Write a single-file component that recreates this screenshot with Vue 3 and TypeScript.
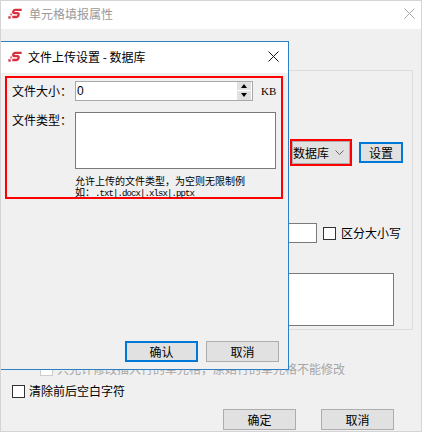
<script setup lang="ts">
// logo is shared by both title bars
const logoPath = "M17 2.4H8.6C7.2 2.4 6.6 3 6.3 4.5C6 6 6.5 6.6 8 6.6H11.5C13 6.6 13.4 7.3 13 8.7C12.6 10.6 12 11.4 10.5 11.4H5";
</script>

<template>
  <div class="window">
    <header class="titlebar">
      <svg class="logo" viewBox="0 0 17 14" width="14" height="11">
        <path :d="logoPath" fill="none" stroke="#d8303f" stroke-width="3" />
        <rect x="0" y="10.5" width="3" height="3" fill="#d8303f" />
        <rect x="2.4" y="7" width="2.4" height="2.4" fill="#e0606c" />
      </svg>
      <span class="title muted">单元格填报属性</span>
      <svg class="close" viewBox="0 0 11 11" width="11" height="11">
        <path d="M0.5 0.5L10.5 10.5M10.5 0.5L0.5 10.5" stroke="#a8a8a8" fill="none" />
      </svg>
    </header>

    <main class="body">
      <section class="group">
        <div class="row source-row">
          <div class="highlight source-mark">
            <div class="select">
              <span>数据库</span>
              <svg viewBox="0 0 9 5" width="9" height="5">
                <path d="M0.5 0.5L4.5 4.5L8.5 0.5" stroke="#666" fill="none" />
              </svg>
            </div>
          </div>
          <button class="btn btn-small primary">设置</button>
        </div>
        <div class="row match-row">
          <div class="field short"></div>
          <label class="check"><i class="box"></i>区分大小写</label>
        </div>
        <div class="field large"></div>
      </section>

      <label class="check disabled"><i class="box"></i>只允许修改插入行的单元格，原始行的单元格不能修改</label>
      <label class="check trim"><i class="box"></i>清除前后空白字符</label>

      <footer class="actions">
        <button class="btn">确定</button>
        <button class="btn">取消</button>
      </footer>
    </main>

    <div class="dialog">
      <header class="dialog-title">
        <svg class="logo" viewBox="0 0 17 14" width="14" height="11">
          <path :d="logoPath" fill="none" stroke="#d8303f" stroke-width="3" />
          <rect x="0" y="10.5" width="3" height="3" fill="#d8303f" />
          <rect x="2.4" y="7" width="2.4" height="2.4" fill="#e0606c" />
        </svg>
        <span class="title">文件上传设置 - 数据库</span>
        <svg class="close" viewBox="0 0 11 11" width="11" height="11">
          <path d="M0.5 0.5L10.5 10.5M10.5 0.5L0.5 10.5" stroke="#111" fill="none" />
        </svg>
      </header>

      <div class="dialog-body">
        <div class="highlight settings">
          <div class="setting size-row">
            <span class="label">文件大小：</span>
            <div class="spinner">
              <span class="value">0</span>
              <div class="spin-btns">
                <span class="spin"><i class="up"></i></span>
                <span class="spin"><i class="down"></i></span>
              </div>
            </div>
            <span class="unit">KB</span>
          </div>
          <div class="setting type-row">
            <span class="label">文件类型：</span>
            <div class="types">
              <div class="field area"></div>
              <p class="hint">允许上传的文件类型，为空则无限制例</p>
              <p class="hint">如：<span class="ext">.txt|.docx|.xlsx|.pptx</span></p>
            </div>
          </div>
        </div>
        <footer class="dialog-actions">
          <button class="btn primary">确认</button>
          <button class="btn">取消</button>
        </footer>
      </div>
    </div>
  </div>
</template>

<style>
html,
body {
  margin: 0;
  background: #f0f0f0;
}
</style>

<style scoped>
.window {
  position: relative;
  width: 422px;
  height: 432px;
  box-sizing: border-box;
  border: 1px solid #d4d4d4;
  display: flex;
  flex-direction: column;
  background: #f0f0f0;
  overflow: hidden;
  font-family: "Noto Sans CJK SC", "Liberation Sans", sans-serif;
  font-size: 12px;
  color: #000;
}

.titlebar {
  height: 28px;
  flex: none;
  box-sizing: border-box;
  background: #fff;
  display: flex;
  align-items: center;
  padding: 0 6px 3px 7px;
}

.logo {
  flex: none;
  margin-right: 7px;
}

.title {
  flex: 1;
  font-size: 12px;
}

.muted {
  color: #999;
}

.body {
  flex: 1;
  min-height: 0;
  display: flex;
  flex-direction: column;
}

.group {
  margin: 41px 8px 0 20px;
  height: 260px;
  flex: none;
  box-sizing: border-box;
  border: 1px solid #dcdcdc;
  padding-right: 18px;
  display: flex;
  flex-direction: column;
  align-items: flex-end;
}

.row {
  display: flex;
  align-items: center;
}

.source-row {
  margin: 68px -9px 0 0;
  gap: 7px;
}

.highlight {
  box-sizing: border-box;
  border: 2px solid #f00;
}

.select {
  width: 58px;
  height: 23px;
  box-sizing: border-box;
  border: 1px solid #adadad;
  background: #e1e1e1;
  display: flex;
  align-items: center;
  justify-content: space-between;
  padding: 0 5px 0 0;
}

.match-row {
  margin: 57px -7px 0 0;
  gap: 6px;
}

.match-row .check {
  gap: 5px;
}

.field {
  box-sizing: border-box;
  border: 1px solid #7a7a7a;
  background: #fff;
}

.short {
  width: 60px;
  height: 20px;
}

.large {
  width: 120px;
  height: 53px;
  margin-top: 30px;
}

.check {
  display: flex;
  align-items: center;
  gap: 4px;
  height: 16px;
  line-height: 16px;
  white-space: nowrap;
}

.box {
  width: 13px;
  height: 13px;
  box-sizing: border-box;
  border: 1px solid #333;
  background: #fff;
}

.disabled {
  margin: 31px 0 0 39px;
  color: #a6a6a6;
}

.disabled .box {
  border-color: #ccc;
}

.trim {
  margin: 6px 0 0 11px;
}

.actions {
  display: flex;
  justify-content: flex-end;
  gap: 25px;
  margin-top: 10px;
  padding-right: 27px;
}

.btn {
  width: 73px;
  height: 21px;
  box-sizing: border-box;
  padding: 0;
  border: 1px solid #adadad;
  background: #e1e1e1;
  font: inherit;
  line-height: 17px;
  color: #000;
}

.btn-small {
  width: 44px;
}

.primary {
  border: 2px solid #0078d7;
}

.dialog {
  position: absolute;
  left: -1px;
  top: 40px;
  width: 289px;
  height: 329px;
  box-sizing: border-box;
  border: 1px solid #2b7fc4;
  background: #f0f0f0;
  display: flex;
  flex-direction: column;
}

.dialog-title {
  height: 31px;
  flex: none;
  box-sizing: border-box;
  background: #fff;
  display: flex;
  align-items: center;
  padding: 0 9px 2px 7px;
}

.dialog-title .logo {
  margin-right: 6px;
}

.dialog-body {
  flex: 1;
  display: flex;
  flex-direction: column;
  padding: 3px 9px 7px 4px;
}

.settings {
  width: 278px;
  height: 123px;
  padding: 2px 0 0 5px;
}

.setting {
  display: flex;
}

.label {
  width: 63px;
  flex: none;
  line-height: 16px;
}

.size-row {
  align-items: center;
  height: 21px;
}

.spinner {
  width: 178px;
  height: 20px;
  box-sizing: border-box;
  border: 1px solid #a9a9a9;
  background: #fff;
  display: flex;
  justify-content: space-between;
  align-items: center;
  padding-left: 1px;
}

.value {
  font-family: "Liberation Sans", sans-serif;
}

.spin-btns {
  width: 14px;
  height: 18px;
  margin-right: 1px;
  display: flex;
  flex-direction: column;
  gap: 1px;
}

.spin {
  flex: 1;
  background: #e1e1e1;
  display: flex;
  align-items: center;
  justify-content: center;
}

.up {
  border: 3px solid transparent;
  border-top: 0;
  border-bottom: 4px solid #000;
}

.down {
  border: 3px solid transparent;
  border-bottom: 0;
  border-top: 4px solid #000;
}

.unit {
  margin-left: 8px;
  font-family: "Liberation Serif", serif;
  font-size: 11px;
}

.type-row {
  margin-top: 11px;
}

.area {
  width: 201px;
  height: 57px;
  margin-bottom: 6px;
}

.hint {
  margin: 0;
  height: 11px;
  font-size: 10px;
  line-height: 11px;
  white-space: nowrap;
}

.ext {
  font-family: "Liberation Mono", monospace;
  font-size: 9px;
  letter-spacing: -0.9px;
}

.dialog-actions {
  display: flex;
  justify-content: flex-end;
  gap: 8px;
  margin-top: auto;
}
</style>
